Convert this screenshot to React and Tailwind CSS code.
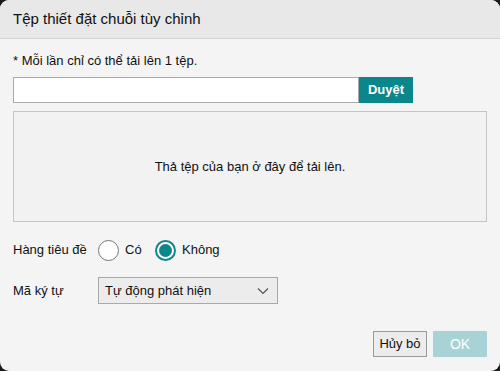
export default function App() {
  return (
    <div className="w-[500px] h-[371px] bg-[#1a1a1a]" style={{ fontFamily: '"Liberation Sans", Arial, sans-serif' }}>
      <div className="w-[500px] h-[371px] rounded-[9px] overflow-hidden bg-[#f4f4f4] flex flex-col text-[#111]">
        <div className="h-[39px] bg-[#e8e8e8] border-b border-[#d2d2d2] flex items-center px-[13px] text-[15px] text-[#111]">
          Tệp thiết đặt chuỗi tùy chỉnh
        </div>
        <div className="px-[13px] flex flex-col">
          <div className="mt-[14px] text-[13px] leading-[16px] h-[16px]">* Mỗi lần chỉ có thể tải lên 1 tệp.</div>
          <div className="mt-[8px] flex h-[26px]">
            <div className="w-[346px] bg-white border border-[#a9a9a9]"></div>
            <div className="w-[54px] bg-[#0b878c] text-white text-[13px] font-bold flex items-center justify-center">Duyệt</div>
          </div>
          <div className="mt-[8px] h-[111px] w-[474px] bg-[#f2f2f2] border border-[#c4c4c4] flex items-center justify-center text-[13px]">
            Thả tệp của bạn ở đây để tải lên.
          </div>
          <div className="mt-[17px] flex items-center h-[22px] text-[13px]">
            <span className="w-[85px]">Hàng tiêu đề</span>
            <span className="w-[21px] h-[21px] rounded-full border-[1.5px] border-[#777] bg-white"></span>
            <span className="ml-[6px] w-[30px]">Có</span>
            <span className="w-[21px] h-[21px] rounded-full border-[2px] border-[#0b878c] bg-white flex items-center justify-center">
              <span className="w-[13px] h-[13px] rounded-full bg-[#0b878c]"></span>
            </span>
            <span className="ml-[6px]">Không</span>
          </div>
          <div className="mt-[16px] flex items-center h-[27px] text-[13px]">
            <span className="w-[85px]">Mã ký tự</span>
            <div className="w-[180px] h-[27px] bg-[#ececec] border border-[#a9a9a9] flex items-center justify-between pl-[6px] pr-[8px]">
              <span>Tự động phát hiện</span>
              <svg width="12" height="8" viewBox="0 0 12 8" fill="none">
                <path d="M1 1.5 L6 6.5 L11 1.5" stroke="#555" strokeWidth="1.2" />
              </svg>
            </div>
          </div>
          <div className="mt-[27px] flex justify-end gap-[6px] text-[13px]">
            <div className="w-[54px] h-[26px] bg-[#ececec] border border-[#9a9a9a] flex items-center justify-center text-[#111]">Hủy bỏ</div>
            <div className="w-[54px] h-[26px] bg-[#a8d3d6] text-white flex items-center justify-center text-[14px]">OK</div>
          </div>
        </div>
      </div>
    </div>
  );
}
